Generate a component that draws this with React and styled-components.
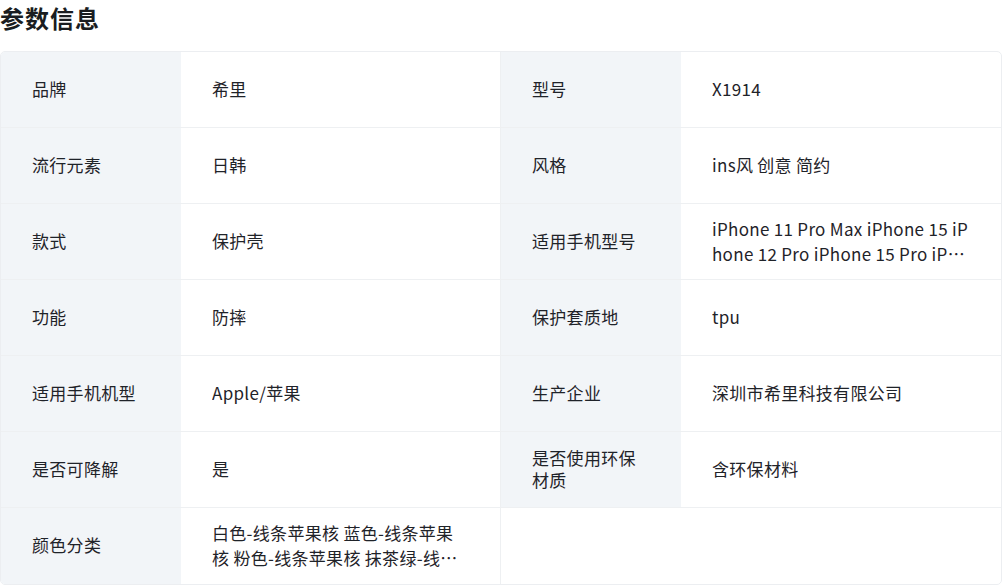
import React from "react";
import styled, { createGlobalStyle } from "styled-components";

const GlobalStyle = createGlobalStyle`
  body {
    margin: 0;
    background: #ffffff;
    font-family: "Noto Sans CJK SC", "Noto Sans", sans-serif;
    color: #1f2329;
  }
`;

const Wrapper = styled.div`
  width: 1002px;
`;

const Title = styled.h2`
  margin: 0;
  height: 51px;
  padding-top: 1px;
  box-sizing: border-box;
  font-size: 24px;
  line-height: 34px;
  letter-spacing: 1px;
  font-weight: 700;
  color: #1a1d21;
`;

const Table = styled.div`
  border: 1px solid #eceef1;
  border-radius: 5px;
  overflow: hidden;
`;

const Row = styled.div`
  display: flex;
  height: 75px;
  border-bottom: 1px solid #eef0f2;
  &:last-child {
    border-bottom: none;
    height: 76px;
  }
`;

const Label = styled.div`
  width: 180px;
  flex-shrink: 0;
  box-sizing: border-box;
  padding: 0 40px 2px 31px;
  background: ${(p) => (p.$empty ? "#ffffff" : "#f2f5f8")};
  display: flex;
  align-items: center;
  font-size: 17px;
  letter-spacing: 0.3px;
  line-height: 22px;
  color: #1f2329;
`;

const Value = styled.div`
  width: 320px;
  flex-shrink: 0;
  box-sizing: border-box;
  padding: 0 31px 2px 31px;
  border-right: ${(p) => (p.$first ? "1px solid #eef0f2" : "none")};
  display: flex;
  align-items: center;
  font-size: 17px;
  letter-spacing: 0.3px;
  line-height: 25px;
  color: #1f2329;
`;

const Clamp = styled.span`
  display: -webkit-box;
  -webkit-line-clamp: 2;
  -webkit-box-orient: vertical;
  overflow: hidden;
  word-break: break-all;
`;

const rows = [
  [["品牌", "希里"], ["型号", "X1914"]],
  [["流行元素", "日韩"], ["风格", "ins风 创意 简约"]],
  [["款式", "保护壳"], ["适用手机型号", "iPhone 11 Pro Max iPhone 15 iPhone 12 Pro iPhone 15 Pro iPhone 14 Pro Max iPhone 13"]],
  [["功能", "防摔"], ["保护套质地", "tpu"]],
  [["适用手机机型", "Apple/苹果"], ["生产企业", "深圳市希里科技有限公司"]],
  [["是否可降解", "是"], ["是否使用环保材质", "含环保材料"]],
  [["颜色分类", "白色-线条苹果核 蓝色-线条苹果核 粉色-线条苹果核 抹茶绿-线条苹果核"], ["", ""]],
];

export default function App() {
  return (
    <Wrapper>
      <GlobalStyle />
      <Title>参数信息</Title>
      <Table>
        {rows.map((row, i) => (
          <Row key={i}>
            {row.map(([label, value], j) => (
              <React.Fragment key={j}>
                <Label $empty={!label}>{label}</Label>
                <Value $first={j === 0}>
                  <Clamp>{value}</Clamp>
                </Value>
              </React.Fragment>
            ))}
          </Row>
        ))}
      </Table>
    </Wrapper>
  );
}
